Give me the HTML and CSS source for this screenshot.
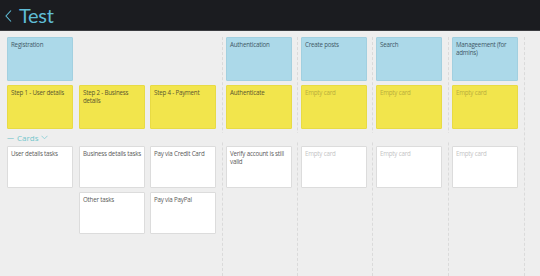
FILE: index.html
```html
<!DOCTYPE html>
<html lang="en">
<head>
    <meta charset="UTF-8">
    <meta name="viewport" content="width=device-width, initial-scale=1.0">
    <title>Test</title>
    <link rel="stylesheet" href="styles.css">
</head>
<body>
    <div class="topbar">
        <svg class="back" width="10" height="14" viewBox="0 0 10 14">
            <polyline points="7,1.5 2,7 7,12.5" fill="none" stroke="#5fbcd6" stroke-width="1.1"/>
        </svg>
        <h1>Test</h1>
    </div>

    <div class="board">
        <!-- lane separators -->
        <div class="lane-line c4"></div>
        <div class="lane-line c5"></div>
        <div class="lane-line c6"></div>
        <div class="lane-line c7"></div>
        <div class="lane-line c8"></div>

        <!-- activities -->
        <div class="card blue c1 r1">Registration</div>
        <div class="card blue lane c4 r1">Authentication</div>
        <div class="card blue lane c5 r1">Create posts</div>
        <div class="card blue lane c6 r1">Search</div>
        <div class="card blue lane c7 r1">Manageement (for admins)</div>

        <!-- steps -->
        <div class="card yellow c1 r2">Step 1 - User details</div>
        <div class="card yellow c2 r2">Step 2 - Business details</div>
        <div class="card yellow c3 r2">Step 4 - Payment</div>
        <div class="card yellow lane c4 r2">Authenticate</div>
        <div class="card yellow empty lane c5 r2">Empty card</div>
        <div class="card yellow empty lane c6 r2">Empty card</div>
        <div class="card yellow empty lane c7 r2">Empty card</div>

        <div class="release">
            <span class="dash">&mdash;</span>
            <span>Cards</span>
            <svg width="7" height="5" viewBox="0 0 7 5">
                <polyline points="0.5,0.8 3.5,3.8 6.5,0.8" fill="none" stroke="#8ccfd6" stroke-width="0.9"/>
            </svg>
        </div>

        <!-- tasks -->
        <div class="card white c1 r4">User details tasks</div>
        <div class="card white c2 r4">Business details tasks</div>
        <div class="card white c3 r4">Pay via Credit Card</div>
        <div class="card white lane c4 r4">Verify account is still valid</div>
        <div class="card white empty lane c5 r4">Empty card</div>
        <div class="card white empty lane c6 r4">Empty card</div>
        <div class="card white empty lane c7 r4">Empty card</div>

        <div class="card white c2 r5">Other tasks</div>
        <div class="card white c3 r5">Pay via PayPal</div>
    </div>
</body>
</html>
```

FILE: styles.css
```css
body {
    margin: 0;
    background-color: #eeeeee;
    font-family: "Open Sans", Arial, sans-serif;
    overflow: hidden;
}
.topbar {
    height: 31px;
    background-color: #1b1c20;
    border-bottom: 1px solid #3a3b3f;
    box-sizing: border-box;
    display: flex;
    align-items: center;
    padding-left: 4px;
}
.topbar .back {
    margin-top: 1px;
}
.topbar h1 {
    margin: 0 0 0 5px;
    font-family: Lato, "Open Sans", sans-serif;
    font-weight: normal;
    font-size: 20px;
    color: #5fbcd6;
    letter-spacing: -0.3px;
}
.board {
    display: grid;
    grid-template-columns: 72px 71px 72px 75px 75px 76px 76px 20px;
    grid-template-rows: 44px 44px 9px 42px 42px 1fr;
    row-gap: 4px;
    padding: 6px 0 0 7px;
    height: calc(100vh - 31px);
    box-sizing: border-box;
}
.lane-line {
    grid-row: 1 / -1;
    border-left: 1px dashed #dadada;
}
.c1 { grid-column: 1; }
.c2 { grid-column: 2; }
.c3 { grid-column: 3; }
.c4 { grid-column: 4; }
.c5 { grid-column: 5; }
.c6 { grid-column: 6; }
.c7 { grid-column: 7; }
.c8 { grid-column: 8; }
.r1 { grid-row: 1; }
.r2 { grid-row: 2; }
.r4 { grid-row: 4; }
.r5 { grid-row: 5; }
.card {
    width: 66px;
    box-sizing: border-box;
    padding: 3px 0 0 3px;
    font-size: 6.2px;
    line-height: 7.5px;
    letter-spacing: -0.2px;
    color: #4a4a4a;
    border-radius: 1px;
}
.card.lane {
    margin-left: 4px;
}
.blue {
    background-color: #acd9e9;
    color: #3f5866;
    border: 1px solid #a2d0e0;
}
.yellow {
    background-color: #f2e54c;
    color: #5a5630;
    border: 1px solid #e8db44;
}
.yellow.empty {
    color: #b9ad3c;
}
.white {
    background-color: #ffffff;
    border: 1px solid #dcdcdc;
    color: #5a5a5a;
}
.white.empty {
    color: #c4c4c4;
}
.release {
    grid-column: 1 / 8;
    grid-row: 3;
    display: flex;
    align-items: center;
    gap: 3px;
    font-size: 8px;
    color: #72c6cc;
    background-color: #eeeeee;
    margin-right: 60px;
    z-index: 1;
}
.release .dash {
    color: #6fc2c8;
    font-size: 7px;
}
```
